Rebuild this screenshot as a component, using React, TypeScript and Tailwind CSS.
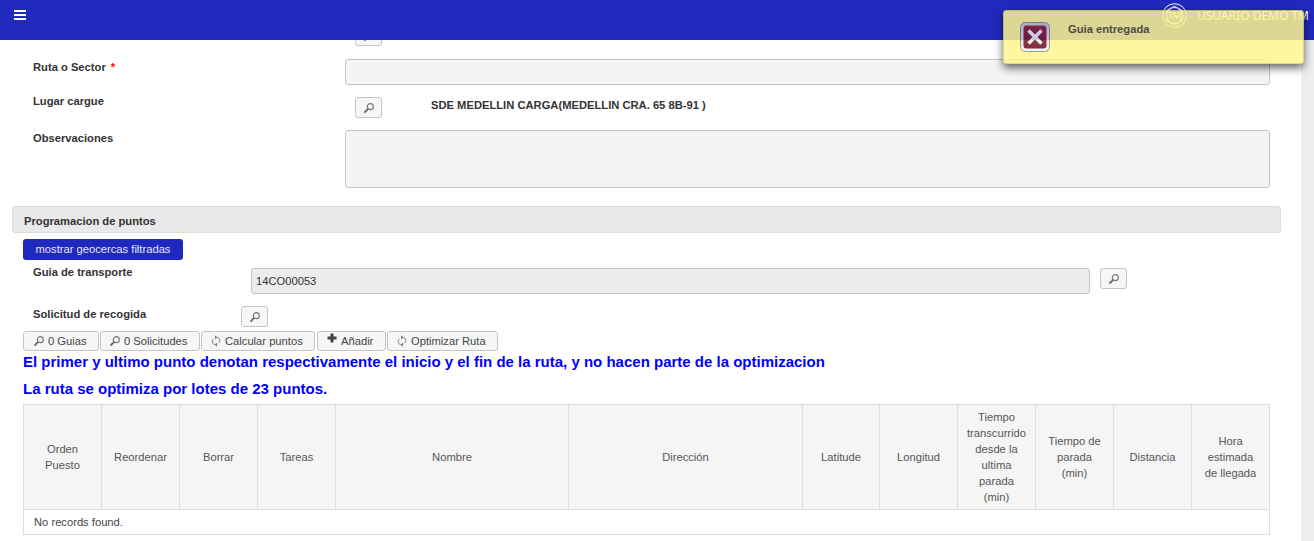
const SearchIcon = () => (
  <svg width="14" height="14" viewBox="0 0 14 14" className="shrink-0" fill="none">
    <circle cx="8.3" cy="5.7" r="3" stroke="#777" strokeWidth="1.2" />
    <path d="M5.9 8.1 L3 11" stroke="#6a6a6a" strokeWidth="1.8" strokeLinecap="round" />
  </svg>
);

const RefreshIcon = () => (
  <svg width="14" height="14" viewBox="0 0 14 14" className="shrink-0" fill="none">
    <path d="M8.4 3.2 C11 4 11.6 7.4 9.4 9.2" stroke="#777" strokeWidth="1" />
    <path d="M5.6 10.6 C3 9.9 2.4 6.6 4.6 4.8" stroke="#777" strokeWidth="1" />
    <path d="M6 1.2 L8.4 3.4 L6 5.2 Z" fill="#777" />
    <path d="M8 8.8 L5.6 10.6 L8 12.8 Z" fill="#777" />
  </svg>
);

const PlusIcon = () => (
  <svg width="14" height="14" viewBox="0 0 14 14" className="shrink-0 -mt-[6px]" fill="none">
    <path d="M7 2.5 V11.5 M2.5 7 H11.5" stroke="#444" strokeWidth="3" />
  </svg>
);

const IconBtn = () => (
  <button className="w-[27px] h-[21px] shrink-0 flex items-center justify-center border border-[#c5c5c5] rounded-[3px] bg-[#f6f6f6]">
    <SearchIcon />
  </button>
);

const Label = ({ children }: { children: React.ReactNode }) => (
  <div className="text-[11.2px] leading-[14px] font-bold text-[#333]">{children}</div>
);

const ToolBtn = ({ icon, label, w }: { icon: React.ReactNode; label: string; w: string }) => (
  <button className={`${w} h-[20px] flex items-center gap-[2px] border border-[#c5c5c5] rounded-[3px] bg-[#f6f6f6] text-[11.2px] text-[#454545]`}>
    {icon}
    <span>{label}</span>
  </button>
);

const headers = [
  { t: "Orden Puesto", w: "w-[78px]", px: "px-[8px]" },
  { t: "Reordenar", w: "w-[78px]", px: "" },
  { t: "Borrar", w: "w-[78px]", px: "" },
  { t: "Tareas", w: "w-[78px]", px: "" },
  { t: "Nombre", w: "w-[233px]", px: "" },
  { t: "Dirección", w: "w-[234px]", px: "" },
  { t: "Latitude", w: "w-[77px]", px: "" },
  { t: "Longitud", w: "w-[78px]", px: "" },
  { t: "Tiempo transcurrido desde la ultima parada (min)", w: "w-[78px]", px: "px-[8px]" },
  { t: "Tiempo de parada (min)", w: "w-[78px]", px: "px-[8px]" },
  { t: "Distancia", w: "w-[78px]", px: "" },
  { t: "Hora estimada de llegada", w: "w-[78px]", px: "px-[10px]" },
];

export default function App() {
  return (
    <div className="relative w-[1314px] h-[541px] overflow-hidden bg-white flex flex-col font-['Liberation_Sans',Arial,sans-serif]">
      <header className="h-10 shrink-0 bg-[#2029bd] flex items-start justify-between relative">
        <div className="ml-[14px] mt-[10px] w-[12px] flex flex-col gap-[2px]">
          <div className="h-[2px] bg-white" />
          <div className="h-[2px] bg-white" />
          <div className="h-[2px] bg-white" />
        </div>
        <div className="flex items-center mt-[3px] mr-[5px] gap-[10px] text-white">
          <svg width="25" height="25" viewBox="0 0 25 25" fill="none">
            <circle cx="12.5" cy="12.5" r="11.8" stroke="white" strokeWidth="1" />
            <path d="M12.5 3 L20.5 7.5 V17.5 L12.5 22 L4.5 17.5 V7.5 Z" stroke="white" strokeWidth="0.8" strokeLinejoin="round" />
            <circle cx="12.5" cy="12.5" r="8" fill="#2029bd" stroke="white" strokeWidth="1.2" />
            <text x="12.5" y="15.6" textAnchor="middle" fontSize="8.5" fill="white" fontFamily="Noto Sans">TM</text>
          </svg>
          <span className="text-[12px] font-['Noto_Sans',sans-serif]">USUARIO DEMO TM</span>
        </div>
      </header>

      <div className="flex-1 flex min-h-0">
        <main className="w-[1301px] shrink-0 overflow-hidden">
          <div className="ml-[355px] w-[27px] h-[6px] overflow-hidden flex items-end">
            <IconBtn />
          </div>

          <div className="flex mt-[13px] h-[26px]">
            <div className="w-[345px] pl-[33px] pt-px">
              <Label>Ruta o Sector <span className="text-[#f00] ml-[2px]">*</span></Label>
            </div>
            <div className="w-[925px] border border-[#c5c5c5] rounded-[3px] bg-[#f4f4f4]" />
          </div>

          <div className="flex mt-[12px] h-[21px]">
            <div className="w-[355px] pl-[33px] -mt-[3px]">
              <Label>Lugar cargue</Label>
            </div>
            <IconBtn />
            <div className="ml-[49px] text-[11.2px] font-bold text-[#333] leading-[14px] mt-px">SDE MEDELLIN CARGA(MEDELLIN CRA. 65 8B-91 )</div>
          </div>

          <div className="flex mt-[12px] h-[58px]">
            <div className="w-[345px] pl-[33px] pt-px">
              <Label>Observaciones</Label>
            </div>
            <div className="w-[925px] border border-[#c5c5c5] rounded-[3px] bg-[#f4f4f4]" />
          </div>

          <div className="mt-[18px] ml-[12px] w-[1269px] h-[27px] border border-[#dddddd] rounded-[3px] bg-[#e9e9e9] flex items-center pl-[11px] pt-[2px]">
            <Label>Programacion de puntos</Label>
          </div>

          <button className="block mt-[6px] ml-[23px] w-[160px] h-[21px] rounded-[3px] bg-[#2029bd] text-[11.2px] text-[#e6e6f5]">mostrar geocercas filtradas</button>

          <div className="flex mt-[8px] h-[26px]">
            <div className="w-[251px] pl-[33px] -mt-[3px]">
              <Label>Guia de transporte</Label>
            </div>
            <div className="w-[839px] border border-[#c5c5c5] rounded-[3px] bg-[#ececec] flex items-center pl-[4px] text-[11.2px] text-[#333]">14CO00053</div>
            <div className="ml-[10px]"><IconBtn /></div>
          </div>

          <div className="flex mt-[12px] h-[21px]">
            <div className="w-[241px] pl-[33px] pt-px">
              <Label>Solicitud de recogida</Label>
            </div>
            <IconBtn />
          </div>

          <div className="flex mt-[4px] ml-[23px]">
            <div className="[&>button]:pl-[8px]"><ToolBtn w="w-[76px]" icon={<SearchIcon />} label="0 Guias" /></div>
            <div className="ml-[1px] [&>button]:pl-[7px]"><ToolBtn w="w-[100px]" icon={<SearchIcon />} label="0 Solicitudes" /></div>
            <div className="ml-[1px] [&>button]:pl-[7px]"><ToolBtn w="w-[114px]" icon={<RefreshIcon />} label="Calcular puntos" /></div>
            <div className="ml-[2px] [&>button]:pl-[7px]"><ToolBtn w="w-[69px]" icon={<PlusIcon />} label="Añadir" /></div>
            <div className="ml-[1px] [&>button]:pl-[7px]"><ToolBtn w="w-[111px]" icon={<RefreshIcon />} label="Optimizar Ruta" /></div>
          </div>

          <p className="ml-[23px] mt-[2px] text-[15px] leading-[17px] font-bold text-[#0000ff]">El primer y ultimo punto denotan respectivamente el inicio y el fin de la ruta, y no hacen parte de la optimizacion</p>
          <p className="ml-[23px] mt-[10px] text-[15px] leading-[17px] font-bold text-[#0000ff]">La ruta se optimiza por lotes de 23 puntos.</p>

          <table className="mt-[7px] ml-[23px] w-[1246px] table-fixed border-collapse text-[11.2px] leading-4 text-[#555]">
            <thead>
              <tr className="h-[105px]">
                {headers.map((h) => (
                  <th key={h.t} className={`${h.w} ${h.px} border border-[#dddddd] bg-[#f5f5f5] font-normal text-center`}>{h.t}</th>
                ))}
              </tr>
            </thead>
            <tbody>
              <tr className="h-[25px]">
                <td colSpan={12} className="border border-[#dddddd] px-[10px] text-[#444]">No records found.</td>
              </tr>
            </tbody>
          </table>
        </main>
        <div className="w-[13px] shrink-0 bg-[#eeeeee]" />
      </div>

      <div className="absolute left-[1003px] top-[10px] w-[301px] h-[54px] rounded-[3px] border border-[#d9d27a] bg-[#fff68f] opacity-85 shadow-[0_4px_8px_rgba(0,0,0,0.7)] flex items-start">
        <svg width="30" height="30" viewBox="0 0 30 30" className="ml-[16px] mt-[11px] shrink-0">
          <defs>
            <linearGradient id="frame" x1="0" y1="0" x2="0" y2="1">
              <stop offset="0" stopColor="#c4c4c4" />
              <stop offset="1" stopColor="#f4f4f4" />
            </linearGradient>
            <linearGradient id="red" x1="0" y1="0" x2="0" y2="1">
              <stop offset="0" stopColor="#8f2535" />
              <stop offset="1" stopColor="#680c1b" />
            </linearGradient>
          </defs>
          <rect x="0.5" y="0.5" width="29" height="29" rx="5" fill="url(#frame)" stroke="#8a8a8a" />
          <rect x="3.5" y="3.5" width="23" height="23" rx="3" fill="url(#red)" />
          <path d="M8.5 8.5 L21.5 21.5 M21.5 8.5 L8.5 21.5" stroke="#ece8e8" strokeWidth="3.6" />
        </svg>
        <div className="ml-[18px] mt-[11px] text-[11.2px] leading-[14px] font-bold text-[#55512f]">Guia entregada</div>
      </div>
    </div>
  );
}
